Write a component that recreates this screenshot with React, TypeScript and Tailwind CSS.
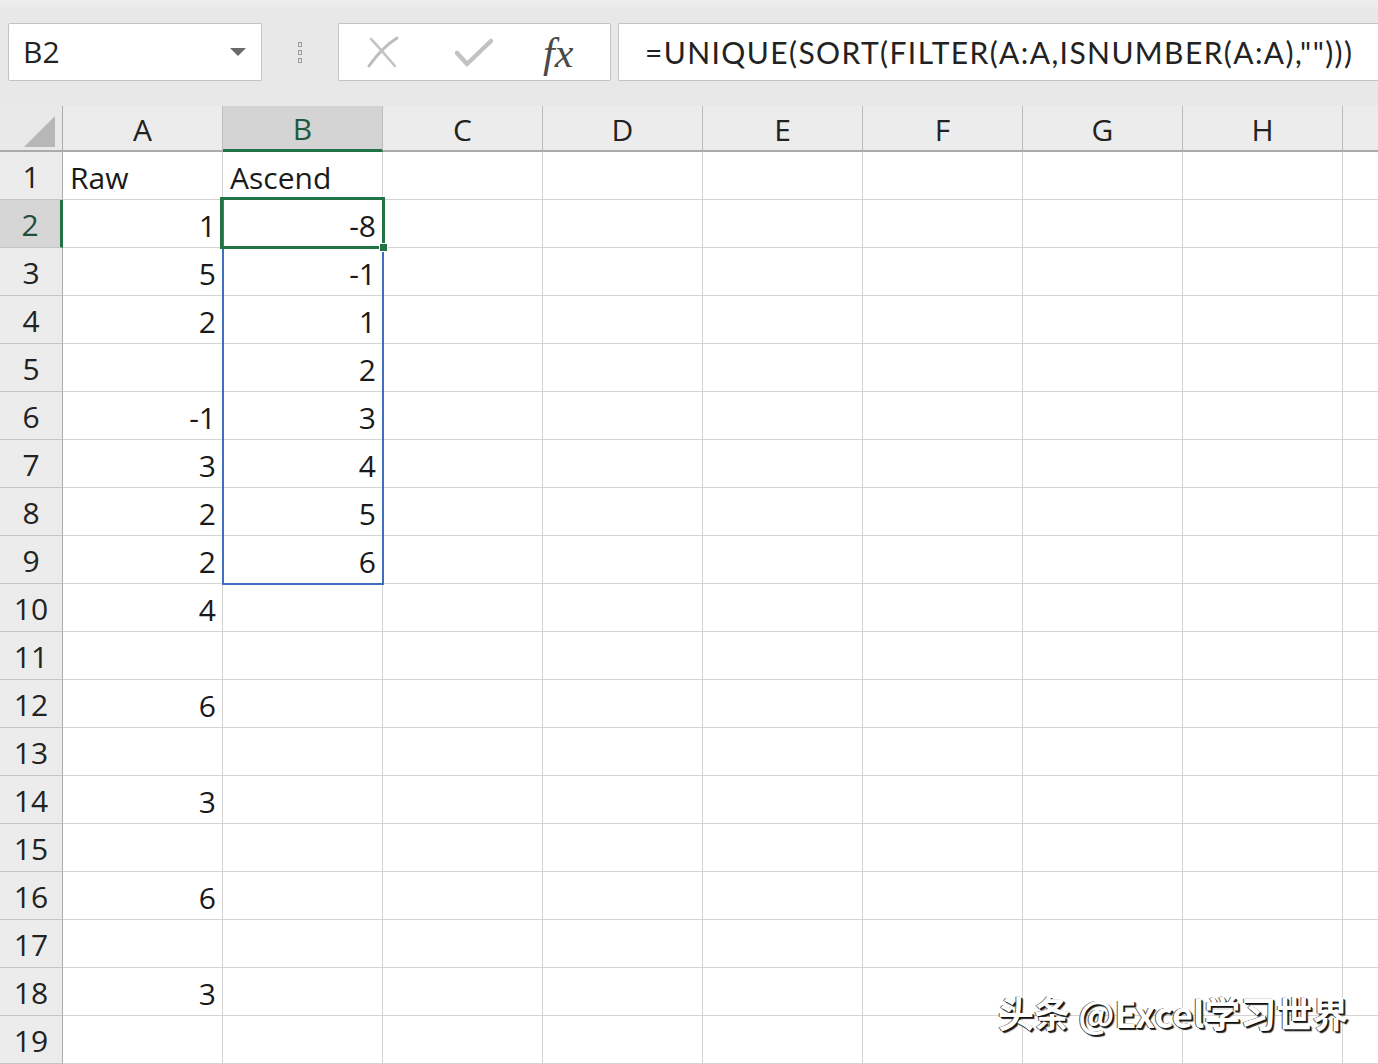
import React from "react";

const COLS = ["A", "B", "C", "D", "E", "F", "G", "H", ""];
const colA: Record<number, string> = {
  1: "Raw",
  2: "1",
  3: "5",
  4: "2",
  6: "-1",
  7: "3",
  8: "2",
  9: "2",
  10: "4",
  12: "6",
  14: "3",
  16: "6",
  18: "3",
};
const colB: Record<number, string> = {
  1: "Ascend",
  2: "-8",
  3: "-1",
  4: "1",
  5: "2",
  6: "3",
  7: "4",
  8: "5",
  9: "6",
};

const rows = Array.from({ length: 19 }, (_, i) => i + 1);

function Cell({ text, last }: { text?: string; last?: boolean }) {
  const isNum = text !== undefined && /^-?\d/.test(text);
  return (
    <div
      className={`h-[48px] border-b border-[#d4d4d4] ${last ? "" : "border-r"} flex items-end pb-[1px] overflow-hidden ${
        isNum ? "justify-end pr-[6px]" : "justify-start pl-[7px]"
      } text-[30px] leading-[40px] text-[#1a1a1a] whitespace-nowrap`}
    >
      {text}
    </div>
  );
}

export default function App() {
  return (
    <div
      className="w-[1378px] h-[1064px] overflow-hidden bg-[#e9e9e9] flex flex-col"
      style={{ fontFamily: '"Open Sans", "Noto Sans", sans-serif' }}
    >
      {/* Toolbar */}
      <div className="h-[107px] flex items-start pt-[23px] pl-[8px] bg-gradient-to-b from-[#efefef] to-[#e8e8e8] to-[10%]">
        <div className="w-[254px] h-[58px] bg-white border border-[#c3c3c3] rounded-[2px] flex items-center pl-[14px] pr-[15px] justify-between">
          <span className="text-[30px] text-[#222] leading-none">B2</span>
          <svg width="16" height="9" viewBox="0 0 16 9">
            <polygon points="0,0 16,0 8,8" fill="#6a6a6a" />
          </svg>
        </div>
        <div className="w-[76px] h-[58px] flex flex-col items-center justify-center gap-[3px]">
          <div className="w-[4px] h-[5px] border border-[#9a9a9a]" />
          <div className="w-[4px] h-[5px] border border-[#9a9a9a]" />
          <div className="w-[4px] h-[5px] border border-[#9a9a9a]" />
        </div>
        <div className="w-[273px] h-[58px] bg-white border border-[#c3c3c3] rounded-[2px] flex items-center">
          <svg width="34" height="32" viewBox="0 0 34 32" className="ml-[27px]">
            <path d="M3 30 C10 20 20 9 31 2" stroke="#bdbdbd" strokeWidth="3" strokeLinecap="round" fill="none" />
            <path d="M5 3 C12 10 20 20 29 30" stroke="#c4c4c4" strokeWidth="2.5" strokeLinecap="round" fill="none" />
          </svg>
          <svg width="38" height="30" viewBox="0 0 38 30" className="ml-[55px]">
            <path d="M2 16 L12 27 L36 4" stroke="#c2c2c2" strokeWidth="4.5" strokeLinecap="round" strokeLinejoin="round" fill="none" />
          </svg>
          <span
            className="ml-[50px] text-[42px] italic text-[#4a4a4a] leading-none mt-[2px]"
            style={{ fontFamily: '"Liberation Serif", "DejaVu Serif", serif' }}
          >
            fx
          </span>
        </div>
        <div className="ml-[7px] flex-1 h-[58px] bg-white border border-[#c3c3c3] border-r-0 rounded-l-[2px] flex items-center pl-[26px]">
          <span
            className="text-[30px] text-[#222] leading-none whitespace-nowrap tracking-[1.4px]"
            style={{ fontFamily: '"Lato", "Open Sans", sans-serif' }}
          >
            =UNIQUE(SORT(FILTER(A:A,ISNUMBER(A:A),"")))
          </span>
        </div>
      </div>

      {/* Grid */}
      <div className="relative flex-1 bg-white">
        <div className="grid grid-cols-[63px_160px_160px_160px_160px_160px_160px_160px_160px_1fr]">
          {/* header row */}
          <div className="h-[46px] bg-[#e9e9e9] border-r border-b-2 border-r-[#ababab] border-b-[#ababab] relative">
            <svg width="32" height="32" viewBox="0 0 32 32" className="absolute left-[24px] top-[10px]">
              <polygon points="0,31 31,0 31,31" fill="#b7b7b7" />
            </svg>
          </div>
          {COLS.map((c, i) =>
            c === "B" ? (
              <div
                key={i}
                className="h-[46px] bg-[#d4d4d4] border-r border-[#bdbdbd] border-b-[3px] border-b-[#217346] flex items-center justify-center text-[30px] text-[#1f5a3c] leading-none pt-[3px]"
              >
                {c}
              </div>
            ) : (
              <div
                key={i}
                className={`h-[46px] bg-[#ececec] ${c ? "border-r border-r-[#bdbdbd]" : ""} border-b-2 border-b-[#ababab] flex items-center justify-center text-[30px] text-[#222] leading-none pt-[3px]`}
              >
                {c}
              </div>
            )
          )}

          {rows.map((r) => (
            <React.Fragment key={r}>
              {r === 2 ? (
                <div className="h-[48px] bg-[#d6d6d6] border-b border-[#c4c4c4] border-r-[3px] border-r-[#217346] flex items-center justify-center text-[30px] text-[#1f4e3d] leading-none pt-[3px]">
                  {r}
                </div>
              ) : (
                <div className="h-[48px] bg-[#ececec] border-b border-[#c4c4c4] border-r border-r-[#ababab] flex items-center justify-center text-[30px] text-[#222] leading-none pt-[3px]">
                  {r}
                </div>
              )}
              <Cell text={colA[r]} />
              <Cell text={colB[r]} />
              <Cell />
              <Cell />
              <Cell />
              <Cell />
              <Cell />
              <Cell />
              <Cell last />
            </React.Fragment>
          ))}
        </div>

        {/* spill range border */}
        <div className="absolute left-[222px] top-[92px] w-[162px] h-[387px] border-2 border-[#3f6fbd] pointer-events-none" />
        {/* active cell border */}
        <div className="absolute left-[220px] top-[91px] w-[165px] h-[52px] border-[3px] border-[#217346] pointer-events-none" />
        {/* fill handle */}
        <div className="absolute left-[379px] top-[137px] w-[9px] h-[9px] bg-[#217346] border border-white pointer-events-none" />

        {/* watermark */}
        <div
          className="absolute left-[998px] top-[888px] text-[36px] font-semibold text-white leading-none whitespace-nowrap"
          style={{
            fontFamily: '"Noto Sans CJK SC", "Noto Sans", sans-serif',
            textShadow: "1px 1px 0 #111, 2px 2px 1px #222, -1px 0 0 #555",
          }}
        >
          头条 @Excel学习世界
        </div>
      </div>
    </div>
  );
}
